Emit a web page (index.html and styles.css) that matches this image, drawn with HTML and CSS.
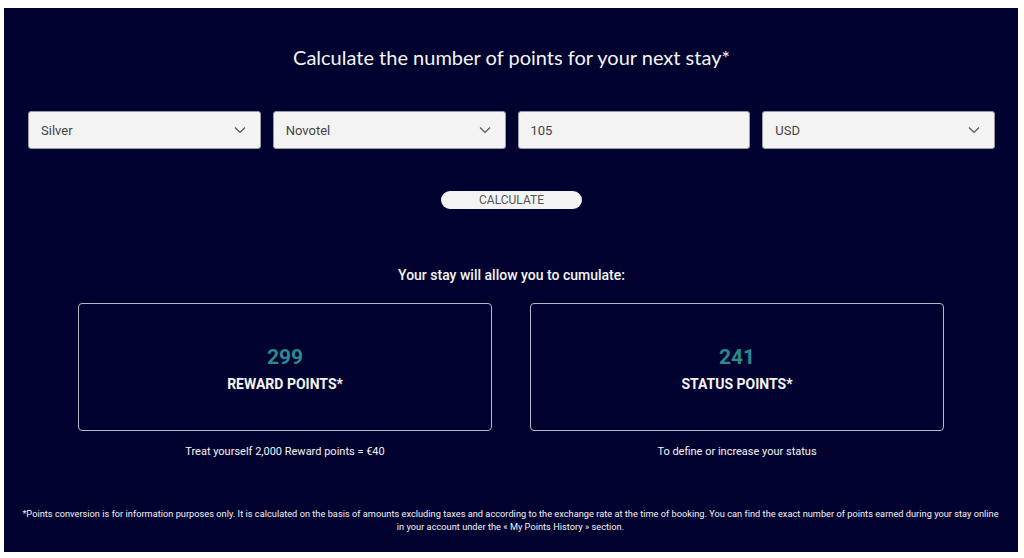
FILE: index.html
```html
<!DOCTYPE html>
<html lang="en">
<head>
    <meta charset="UTF-8">
    <meta name="viewport" content="width=device-width, initial-scale=1.0">
    <title>Points calculator</title>
    <link rel="stylesheet" href="styles.css">
</head>
<body>
    <div class="panel">
        <h1>Calculate the number of points for your next stay*</h1>
        <div class="fields">
            <div class="field select">Silver
                <svg viewBox="0 0 12 8" width="12" height="8"><path d="M1 1.5l5 5 5-5" fill="none" stroke="#555" stroke-width="1.2"/></svg>
            </div>
            <div class="field select">Novotel
                <svg viewBox="0 0 12 8" width="12" height="8"><path d="M1 1.5l5 5 5-5" fill="none" stroke="#555" stroke-width="1.2"/></svg>
            </div>
            <div class="field">105</div>
            <div class="field select">USD
                <svg viewBox="0 0 12 8" width="12" height="8"><path d="M1 1.5l5 5 5-5" fill="none" stroke="#555" stroke-width="1.2"/></svg>
            </div>
        </div>
        <div class="actions">
            <button class="calc">CALCULATE</button>
        </div>
        <h2>Your stay will allow you to cumulate:</h2>
        <div class="results">
            <div class="result">
                <div class="card">
                    <div class="value">299</div>
                    <div class="label">REWARD POINTS*</div>
                </div>
                <p class="note">Treat yourself 2,000 Reward points = €40</p>
            </div>
            <div class="result">
                <div class="card">
                    <div class="value">241</div>
                    <div class="label">STATUS POINTS*</div>
                </div>
                <p class="note">To define or increase your status</p>
            </div>
        </div>
        <p class="disclaimer">*Points conversion is for information purposes only. It is calculated on the basis of amounts excluding taxes and according to the exchange rate at the time of booking. You can find the exact number of points earned during your stay online<br>in your account under the « My Points History » section.</p>
    </div>
</body>
</html>
```

FILE: styles.css
```css
* {
    margin: 0;
    padding: 0;
    box-sizing: border-box;
}

:root {
    --navy: #020230;
    --field: #f3f3f3;
    --teal: #2b8a8c;
    --text-light: #f4f4f4;
}

body {
    font-family: 'Roboto', sans-serif;
    background: #fff;
    padding: 8px 6px 6px 4px;
}

.panel {
    background: var(--navy);
    color: var(--text-light);
    height: 544px;
    padding: 35px 23px 0 24px;
}

h1 {
    font-family: 'Lato', sans-serif;
    font-weight: 400;
    font-size: 20px;
    text-align: center;
    line-height: 28px;
}

.fields {
    display: grid;
    grid-template-columns: repeat(4, 1fr);
    gap: 12px;
    margin-top: 40px;
}

.field {
    height: 38px;
    background: var(--field);
    border: 1px solid #9a9aa6;
    border-radius: 3px;
    color: #444;
    font-size: 13px;
    padding: 0 14px 0 12px;
    display: flex;
    align-items: center;
    justify-content: space-between;
}

.actions {
    display: flex;
    justify-content: center;
    margin-top: 42px;
}

.calc {
    width: 141px;
    height: 18px;
    border: none;
    border-radius: 9px;
    background: #f3f3f3;
    color: #555;
    font-family: 'Roboto', sans-serif;
    font-size: 12px;
    line-height: 18px;
}

h2 {
    font-size: 14px;
    font-weight: 500;
    text-align: center;
    margin-top: 57px;
    line-height: 18px;
}

.results {
    display: flex;
    justify-content: center;
    gap: 38px;
    margin-top: 19px;
    padding-right: 1px;
}

.result {
    width: 414px;
}

.card {
    height: 128px;
    border: 1px solid #b9b9c6;
    border-radius: 4px;
    display: flex;
    flex-direction: column;
    align-items: center;
    justify-content: center;
    padding-top: 1px;
}

.value {
    color: var(--teal);
    font-size: 21px;
    font-weight: 700;
    line-height: 26px;
}

.label {
    font-size: 14px;
    font-weight: 700;
    margin-top: 6px;
}

.note {
    font-size: 11px;
    text-align: center;
    margin-top: 14px;
}

.disclaimer {
    font-size: 9.2px;
    letter-spacing: 0.03px;
    text-align: center;
    line-height: 13px;
    margin: 49px -16px 0 -18px;
    white-space: nowrap;
}
```
